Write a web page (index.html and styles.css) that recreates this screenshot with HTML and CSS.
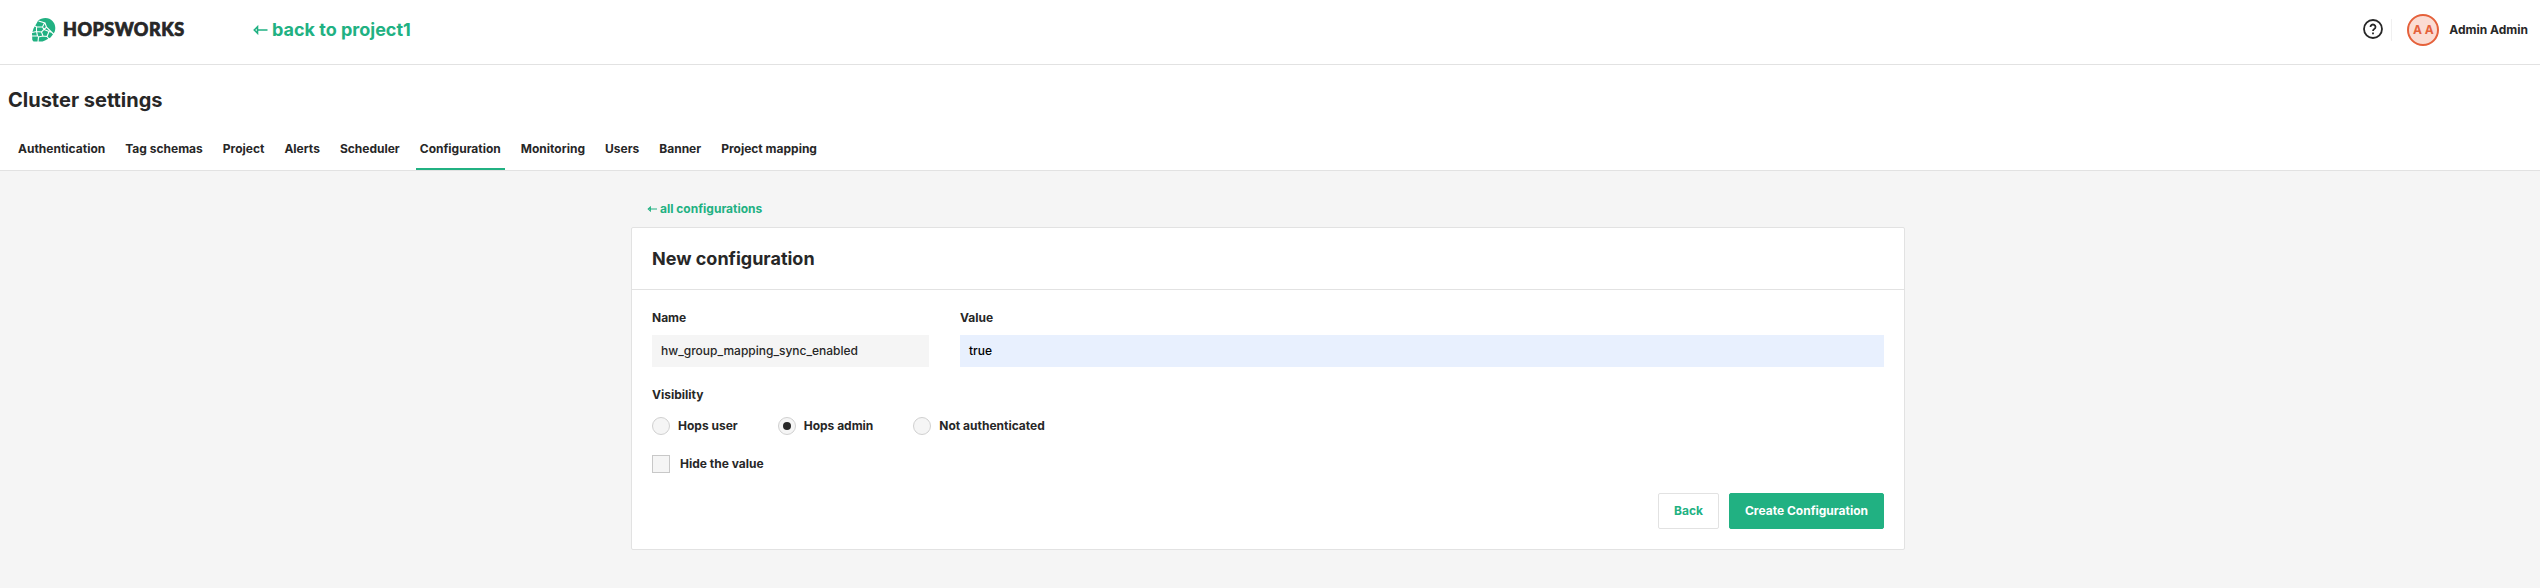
FILE: index.html
```html
<!DOCTYPE html>
<html lang="en">
<head>
<meta charset="utf-8">
<title>Cluster settings</title>
<link rel="stylesheet" href="styles.css">
</head>
<body>
<header class="topbar">
  <div class="brand">
    <svg class="brand-mark" viewBox="0 0 24 24" width="24" height="24" aria-hidden="true">
      <path fill="#21b182" d="M6 2.800C8 .8 10.500 0 13.500 0C19 0 23.300 4.500 23.300 10C23.300 12.500 22.500 14.500 21.300 16L18.500 19.500L13 22.500L10.500 23.500H1.500L.3 22L0 15.500L1.500 10.500L4.500 5.500Z"/>
      <path fill="none" stroke="#fff" stroke-width="1.100" d="M6.500 3L13 5L14.500 9.200L23 17.500M12.500 5L10.500 9L4.500 8.800L3 8M10.500 9L12 11.500L9.500 14L4.500 13.500L4.500 8.800M4.500 13.500L0 14.500M12 11.500L14.500 9.200M12 11.500L17 13.500L20.500 14.500M17 13.500L15 18.500L17.500 21.500M15 18.500L11 18L9.500 14M11 18L6.500 19L5.500 17.800L4.500 13.500M5.500 17.800L0 18M6.500 19L6 24"/>
    </svg>
    <span class="brand-name">HOPSWORKS</span>
  </div>
  <a class="back-link"><svg class="arrow-lg" viewBox="0 0 15 10" width="15" height="10"><path d="M4.500 1.800L1.300 5L4.500 8.200ZM4 5H14.500"/></svg>back to project1</a>
  <div class="account">
    <svg class="help" viewBox="0 0 20 20" width="20" height="20"><circle cx="10" cy="10" r="9"/><path d="M7.500 8A2.500 2.400 0 1 1 11.300 10C10.400 10.600 10 11 10 12"/><path d="M10 13.600V15.200"/></svg>
    <span class="separator"></span>
    <span class="avatar">A A</span>
    <span class="user-name">Admin Admin</span>
  </div>
</header>
<section class="page-head">
  <h1>Cluster settings</h1>
  <nav class="tabs">
    <a>Authentication</a><a>Tag schemas</a><a>Project</a><a>Alerts</a><a>Scheduler</a><a class="active">Configuration</a><a>Monitoring</a><a>Users</a><a>Banner</a><a>Project mapping</a>
  </nav>
</section>
<main class="content">
  <a class="all-link"><svg class="arrow-sm" viewBox="0 0 10 6" width="10" height="6"><path d="M3.300 1.200L1.300 3L3.300 4.800ZM3 3H10"/></svg>all configurations</a>
  <section class="card">
    <h2>New configuration</h2>
    <div class="card-body">
      <div class="fields">
        <label class="field name-field">Name<span class="input">hw_group_mapping_sync_enabled</span></label>
        <label class="field value-field">Value<span class="input filled">true</span></label>
      </div>
      <div class="visibility">Visibility</div>
      <div class="radios">
        <label class="choice"><span class="radio"></span>Hops user</label>
        <label class="choice"><span class="radio checked"></span>Hops admin</label>
        <label class="choice"><span class="radio"></span>Not authenticated</label>
      </div>
      <label class="choice hide-value"><span class="checkbox"></span>Hide the value</label>
      <div class="actions">
        <button class="btn">Back</button>
        <button class="btn primary">Create Configuration</button>
      </div>
    </div>
  </section>
</main>
</body>
</html>
```

FILE: styles.css
```css
* { box-sizing: border-box; }
body {
  margin: 0;
  min-height: 588px;
  background: #f5f5f5;
  color: #272727;
  font: 700 12px/16px Inter, sans-serif;
}
h1, h2 { margin: 0; font-weight: 700; }
svg { display: block; flex: none; }
.topbar {
  display: flex;
  align-items: flex-start;
  height: 65px;
  padding-left: 32px;
  background: #fff;
  border-bottom: 1px solid #e2e2e2;
}
.brand { display: flex; width: 221px; padding-top: 18px; }
.brand-name {
  margin-left: 7px;
  font: 900 18px/23px Lato, sans-serif;
  letter-spacing: .5px;
  -webkit-text-stroke: .7px #272727;
}
.back-link {
  display: flex;
  align-items: center;
  gap: 4px;
  padding-top: 18px;
  color: #21b182;
  font-size: 18px;
  line-height: 24px;
}
.arrow-lg, .arrow-sm { fill: none; stroke: #21b182; stroke-width: 1.6; }
.arrow-sm { stroke-width: 1.2; }
.account { display: flex; align-items: center; margin-left: auto; padding: 14px 12px 0 0; }
.help { fill: none; stroke: #272727; stroke-width: 1.8; margin-top: -2px; }
.separator { width: 1px; height: 22px; margin: 0 15px 0 8px; background: #f0f0f0; }
.avatar {
  width: 32px;
  height: 32px;
  margin-right: 10px;
  border: 2px solid #e5613b;
  border-radius: 50%;
  background: #fbdcd3;
  color: #e5613b;
  line-height: 28px;
  text-align: center;
}
.page-head { height: 106px; padding: 23px 8px 0; background: #fff; border-bottom: 1px solid #e2e2e2; }
h1 { font-size: 20px; line-height: 24px; }
.tabs { display: flex; gap: 12px; margin: 22px 0 0 6px; }
.tabs a { height: 36px; padding: 7px 4px 0; line-height: 16px; border-bottom: 2px solid transparent; }
.tabs .active { border-color: #21b182; }
.content { width: 1274px; margin-left: 631px; padding-top: 29px; }
.all-link { display: flex; align-items: center; gap: 3px; margin-left: 16px; color: #21b182; line-height: 17px; }
.card { margin-top: 10px; background: #fff; border: 1px solid #e2e2e2; border-radius: 2px; }
h2 { height: 62px; padding: 19px 20px; font-size: 18px; line-height: 24px; border-bottom: 1px solid #e2e2e2; }
.card-body { padding: 20px; }
.fields { display: flex; gap: 31px; }
.field { display: flex; flex-direction: column; gap: 9px; }
.name-field { width: 277px; }
.value-field { flex: 1; }
.input { height: 32px; padding: 8px 9px; background: #f5f5f5; font-weight: 500; }
.input.filled { background: #e8f0fe; color: #000; }
.visibility { margin-top: 20px; }
.radios { display: flex; gap: 40px; margin-top: 14px; }
.choice { display: flex; align-items: center; gap: 8px; height: 18px; }
.radio, .checkbox { width: 18px; height: 18px; background: #f5f5f5; border: 1px solid #c8c8c8; }
.radio { display: grid; place-items: center; border-color: #d0d0d0; border-radius: 50%; }
.checked::before { content: ""; width: 8px; height: 8px; border-radius: 50%; background: #272727; }
.hide-value { gap: 10px; margin-top: 20px; }
.actions { display: flex; justify-content: flex-end; gap: 10px; margin-top: 20px; }
.btn {
  height: 36px;
  padding: 0 15px;
  border: 1px solid #e2e2e2;
  border-radius: 2px;
  background: #fff;
  color: #21b182;
  font: inherit;
}
.primary { border-color: #21b182; background: #21b182; color: #fff; }
```
